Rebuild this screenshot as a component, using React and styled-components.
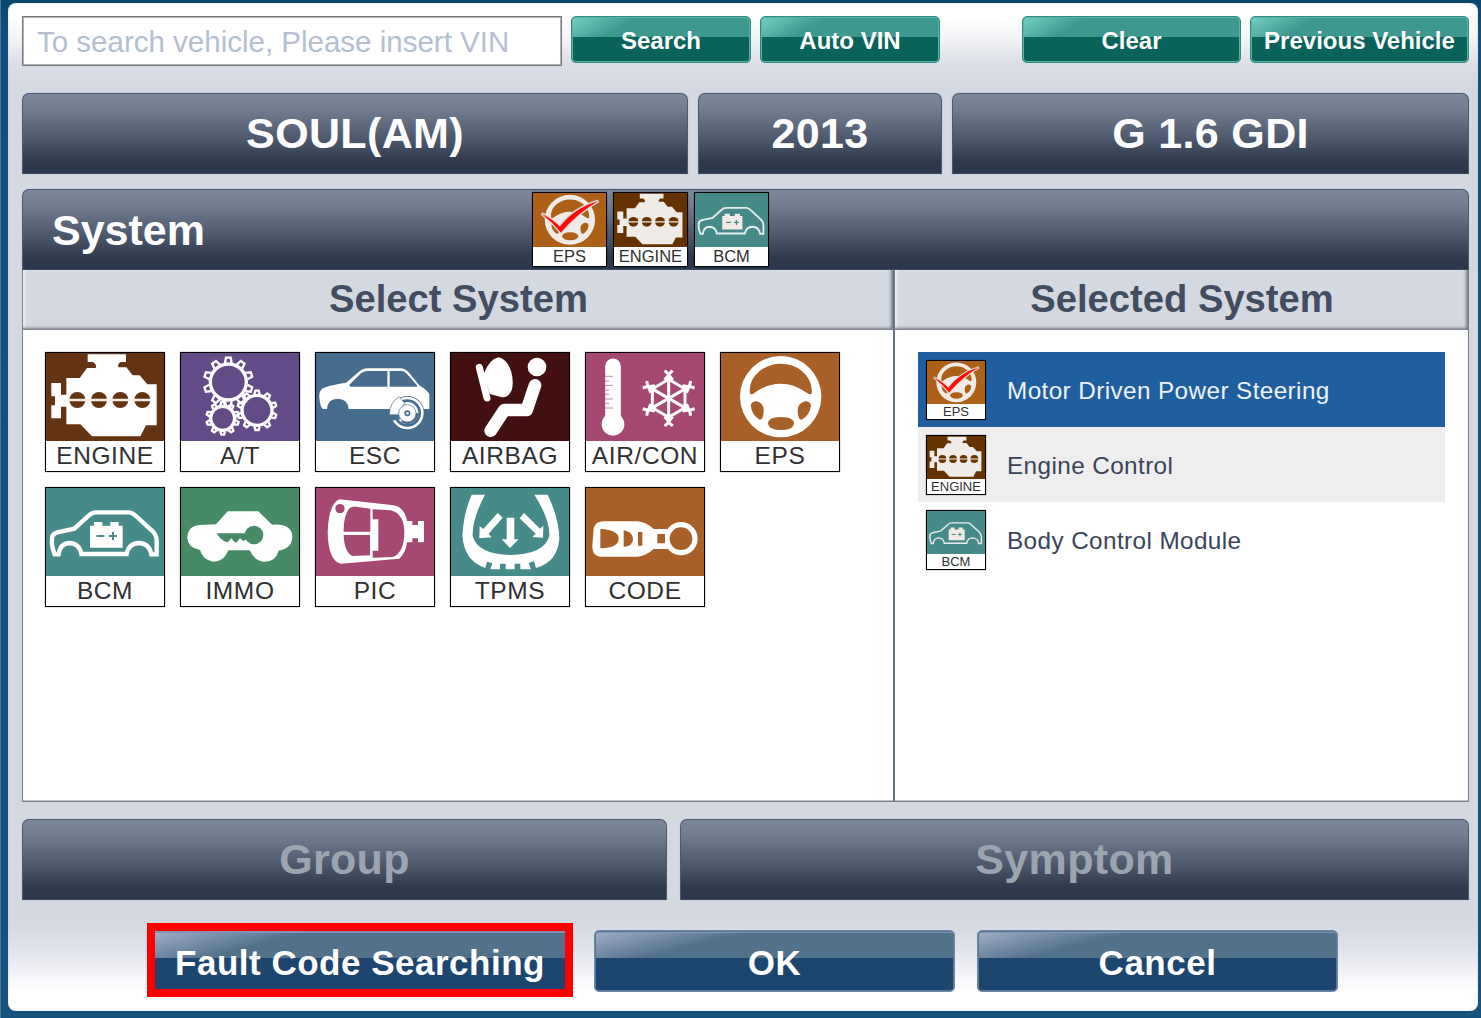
import React from 'react';
import styled, { createGlobalStyle, css } from 'styled-components';

const GlobalStyle = createGlobalStyle`
  * { box-sizing: border-box; }
  html, body { margin: 0; padding: 0; }
  body {
    font-family: "Liberation Sans", Arial, sans-serif;
    background: #124f7d;
    overflow: hidden;
  }
`;

const Frame = styled.div`
  width: 1481px;
  height: 1018px;
  padding: 3px 3px 7px 7px;
  border-left: 1px solid #3f7aa3;
  background: linear-gradient(#0a456c 0, #124f7d 30px, #17527c 100%);
`;

const Panel = styled.main`
  display: flex;
  flex-direction: column;
  height: 1008px;
  padding: 13px 9px 0 14px;
  border-radius: 8px;
  box-shadow: inset 0 0 2px #b9cbd8;
  background: linear-gradient(
    #ffffff 0, #ffffff 12px, #f0f2f5 38px, #dcdfe7 60px, #d4d8e1 82px,
    #d4d8e1 920px, #dfe2e9 945px, #f6f7fa 975px, #ffffff 990px
  );
`;

const SearchRow = styled.div`
  display: flex;
  align-items: flex-start;
  height: 77px;
`;

const VinInput = styled.input`
  width: 540px;
  height: 50px;
  margin-right: 9px;
  padding: 2px 14px 0;
  border: 1px solid #777;
  box-shadow: inset 0 0 0 1px #b4b4b4;
  outline: none;
  background: #fff;
  font: 29.5px "Liberation Sans", Arial, sans-serif;
  color: #2e394e;
  &::placeholder { color: #b6bfd2; opacity: 1; }
`;

const glossy = css`
  display: flex;
  align-items: center;
  justify-content: center;
  margin: 0;
  padding: 0;
  color: #fff;
  font-family: "Liberation Sans", Arial, sans-serif;
  font-weight: bold;
  white-space: nowrap;
`;

const GreenButton = styled.button`
  ${glossy}
  width: ${p => p.$width}px;
  height: 47px;
  margin-left: ${p => p.$before || 0}px;
  padding-top: 2px;
  border: 1px solid #2f8a80;
  border-radius: 5px;
  font-size: 24px;
  box-shadow: inset 0 0 0 1px #5fb0a6;
  background:
    linear-gradient(150deg, #74d0c4 0, rgba(61, 153, 143, 0) 34px) 0 0 / 100% 20px no-repeat,
    linear-gradient(#3d998f 0, #3d998f 20px, #0a635a 20px, #0a635a 100%);
`;

const BarRow = styled.div`
  display: flex;
  gap: ${p => p.$gap}px;
  height: 81px;
`;

const bar = css`
  height: 81px;
  border: 1px solid #4d5a72;
  border-bottom-color: #3e4a61;
  border-radius: 7px 7px 0 0;
  box-shadow: 0 0 1px #8f9aae;
  background: linear-gradient(#7d879b 0, #747e92 14px, #4c576b 46px, #2f394e 68px, #2d374c 100%);
  font-size: 43px;
  font-weight: bold;
`;

const Bar = styled.div`
  ${bar}
  display: flex;
  align-items: center;
  justify-content: center;
  width: ${p => p.$width}px;
  padding-bottom: 1px;
  letter-spacing: 0.35px;
  color: ${p => (p.$disabled ? '#9da4b1' : '#ffffff')};
`;

const SystemSection = styled.section`
  display: flex;
  flex-direction: column;
  width: 1447px;
  height: 613px;
  margin: 15px 0 17px;
`;

const SystemBar = styled.header`
  ${bar}
  flex: none;
  display: flex;
  align-items: center;
  padding-left: 29px;
  color: #fff;
`;

const SystemTitle = styled.span`
  width: 480px;
  padding-top: 2px;
`;

const HeaderIcons = styled.div`
  display: flex;
  gap: 6px;
`;

const Columns = styled.div`
  display: flex;
  flex: 1;
  border: 1px solid #7c7f84;
  border-top: 0;
  box-shadow: inset 0 -1px 0 #c2c5c6;
  background: #fff;
`;

const Column = styled.div`
  width: ${p => p.$width}px;
  border-right: ${p => (p.$divided ? '2px solid #69768a' : '0')};
`;

const ColumnTitle = styled.h2`
  display: flex;
  align-items: center;
  justify-content: center;
  height: 60px;
  margin: 0;
  padding: 0 0 3px 1px;
  color: #424d62;
  background: #d4d8e1;
  box-shadow: inset -3px -3px 3px -1px #777c84, inset 3px 0 3px -1px #f1f3f6;
  font-size: 38.2px;
`;

const SystemGrid = styled.div`
  display: grid;
  grid-template-columns: repeat(6, 120px);
  gap: 15px;
  padding: 22px 0 0 22px;
`;

const TileBox = styled.div`
  flex: none;
  width: ${p => p.$size}px;
  height: ${p => p.$size}px;
  border: 1px solid #000;
  background: #fff;
  box-shadow: 0 0 1px rgba(0, 0, 0, 0.6);
`;

const TileArt = styled.svg`
  display: block;
  width: 100%;
  height: ${p => p.$height}px;
  background: ${p => p.$color};
`;

const TileLabel = styled.div`
  height: ${p => p.$height}px;
  line-height: ${p => p.$height}px;
  color: #303030;
  font-size: ${p => p.$font}px;
  font-weight: normal;
  letter-spacing: ${p => p.$spacing}px;
  text-align: center;
  white-space: nowrap;
`;

const SelectedList = styled.ul`
  margin: 22px 0 0 23px;
  padding: 0;
  width: 527px;
  list-style: none;
`;

const SelectedRow = styled.li`
  display: flex;
  align-items: center;
  height: 75px;
  padding: 1px 0 0 8px;
  background: ${p => p.$fill};
`;

const SelectedName = styled.span`
  padding: 2px 0 0 21px;
  color: ${p => (p.$active ? '#eef2f8' : '#3a4459')};
  font-size: 24.3px;
  letter-spacing: 0.4px;
`;

const Footer = styled.footer`
  display: flex;
  align-items: flex-start;
  height: 74px;
  margin-top: 23px;
  padding-left: 125px;
`;

const BlueButton = styled.button`
  ${glossy}
  width: ${p => p.$width}px;
  height: ${p => p.$height || 62}px;
  margin: ${p => p.$margin || 0};
  padding-top: ${p => (p.$flat ? 6 : 4)}px;
  border: ${p => (p.$flat ? '0' : '1px solid #6f87a6')};
  border-radius: ${p => (p.$flat ? 0 : 5)}px;
  box-shadow: ${p => (p.$flat ? 'inset 0 2px 0 #7f96b0' : 'inset 0 0 0 1px #5b7899, inset 0 2px 0 #8097b0')};
  font-size: 35px;
  letter-spacing: 0.5px;
  background:
    linear-gradient(165deg, #a3afcb 0, rgba(82, 113, 139, 0) 40px) 0 0 / 100% 27px no-repeat,
    linear-gradient(#52718b 0, #52718b 27px, #1c4670 27px, #1c4670 100%);
`;

const Highlight = styled.div`
  width: 426px;
  height: 74px;
  border: 8px solid #ff0000;
`;

function Engine({ bg }) {
  return (
    <>
      <path d="M175 45H290V68H274Q262 76 268 84H291L310 108H331L354 135H382V258H350L333 291H188L153 255H111V202H95V237H66V198H77V171H66V131H95V166H111V116H151L173 86H199Q204 76 190 68H175Z" />
      {[144, 209, 273, 339].map(x => <circle key={x} cx={x} cy="182" r="24" fill={bg} />)}
      <path d="M116 182H364" stroke="#f5ede2" strokeWidth="7" />
    </>
  );
}

function Gear({ x, y, r, tip, w }) {
  const teeth = Array.from({ length: 10 }, (_, i) => i * 36);
  return (
    <g transform={`translate(${x} ${y})`} fill="none" stroke="#fff" strokeWidth="7">
      <circle r={r} strokeWidth="10" />
      {teeth.map(a => (
        <path key={a} transform={`rotate(${a})`} d={`M${-w} ${-r - 3}L${-w + 3} ${-tip}H${w - 3}L${w} ${-r - 3}`} />
      ))}
    </g>
  );
}

function Gearbox() {
  return (
    <>
      <Gear x={597} y={128} r={54} tip={73} w={10} />
      <Gear x={683} y={213} r={45} tip={59} w={8} />
      <Gear x={580} y={237} r={36} tip={49} w={7} />
    </>
  );
}

function Brake({ bg }) {
  return (
    <>
      <path d="M55 209H68Q70 178 100 178Q130 178 133 209H375V165Q372 155 345 138L312 98Q300 87 290 87H185Q170 90 155 105L125 130Q60 140 52 150Q43 160 45 175Q47 200 55 209Z" />
      <path fill={bg} d="M138 142L135 136L170 102Q180 95 190 95H249V142ZM256 95H290Q300 95 306 102L338 138V142H256Z" />
      <circle cx="309" cy="221" r="51" fill={bg} />
      <circle cx="309" cy="221" r="45" fill="none" stroke="#fff" strokeWidth="8" />
      <circle cx="309" cy="221" r="33" fill="#fff" />
      <path d="M342 221A33 33 0 0 1 290 248L297 238A21 21 0 0 0 332 221Z" fill={bg} />
      <path fill={bg} d="M250 227H284L288 240L262 244Z" />
      <path stroke={bg} strokeWidth="2" d="M255 226Q256 188 285 172L301 192L280 226Z" />
      <circle cx="309" cy="222" r="26" stroke={bg} strokeWidth="2" />
      <circle cx="309" cy="222" r="9" fill={bg} />
      <circle cx="309" cy="222" r="4" />
    </>
  );
}

function Airbag() {
  return (
    <>
      <circle cx="698" cy="83" r="28" />
      <path d="M525 84L548 176" stroke="#fff" strokeWidth="21" strokeLinecap="round" />
      <path d="M538 104Q556 58 583 54Q609 60 621 98Q629 130 622 153Q610 178 590 173L556 164Z" />
      <path d="M692 138L667 212H600L559 274" fill="none" stroke="#fff" strokeWidth="38" strokeLinecap="round" strokeLinejoin="round" />
    </>
  );
}

function AirCon({ bg }) {
  const spokes = [0, 60, 120, 180, 240, 300];
  return (
    <>
      <path d="M116 81V250" stroke="#fff" strokeWidth="47" strokeLinecap="round" />
      <circle cx="116" cy="255" r="34" />
      <path d="M91 111H116M91 125H105M91 138H116M91 152H105M91 165H105M91 179H116M91 192H105M91 206H116" stroke={bg} strokeWidth="2.5" opacity=".75" />
      <g transform="translate(283 177)" fill="none" stroke="#fff" strokeWidth="9">
        <path d="M0-57L49-28V28L0 57L-49 28V-28Z" />
        {spokes.map(a => (
          <path key={a} transform={`rotate(${a})`} d="M0 0V-78M-12-83L0-72L12-83M-12-55L0-70L12-55" />
        ))}
      </g>
    </>
  );
}

function Wheel({ bg, checked }) {
  return (
    <>
      <circle cx="619" cy="172" r="122" />
      <g fill={bg}>
        <path d="M527 163Q522 122 557 94Q585 73 619 73Q655 73 682 94Q716 122 712 163Q706 167 698 161Q660 133 619 133Q577 133 540 161Q532 167 527 163Z" />
        <path d="M529 198Q533 185 547 186Q570 192 568 217Q567 240 556 241Q532 228 529 198Z" />
        <path d="M710 198Q706 185 692 186Q669 192 670 217Q671 240 682 241Q707 228 710 198Z" />
        <path d="M581 253Q581 234 620 233Q659 234 659 253Q655 272 620 272Q585 272 581 253Z" />
      </g>
      {checked && (
        <path d="M482 142Q535 168 570 205Q640 114 757 80Q660 136 575 234Q535 184 482 142Z" fill="#ff0a0a" stroke="#ddd8d2" strokeWidth="14" paintOrder="stroke" />
      )}
    </>
  );
}

function BodyCar({ bg, small }) {
  return (
    <>
      <path
        fill="none"
        stroke={small ? '#e6eeed' : '#fff'}
        strokeWidth={small ? 9 : 13}
        d="M88 645H76Q66 620 68 600Q66 585 84 579L135 568L178 529Q188 519 200 519H300Q310 520 320 530L370 576Q382 588 382 605V645H366Q360 612 328 611Q298 612 292 644H156Q150 612 121 611Q92 612 88 645Z"
      />
      <path d="M182 559H194V548H219V559H243V548H268V559H280V625H182Z" />
      <path d="M201 590H225M239 590H263M251 578V602" stroke={bg} strokeWidth="6" />
    </>
  );
}

function KeyCar({ bg }) {
  return (
    <>
      <path d="M595 516H687L728 556Q790 552 789 595Q787 627 748 634Q738 668 705 667Q675 665 661 633H597Q585 667 552 667Q520 662 512 632Q475 625 474 597Q475 560 510 557L560 555Z" />
      <circle cx="674" cy="587" r="28" fill={bg} />
      <path fill={bg} d="M562 582H652V599L642 605L632 597L622 609H616L606 597L595 609L585 606L572 596Z" />
    </>
  );
}

function KeyFob({ bg }) {
  return (
    <>
      <path d="M105 480L262 497Q300 500 308 545H324V557H341V545H359V609H341V597H324V609H308Q305 640 285 658L110 673Q72 665 70 580Q72 495 105 480Z" />
      <path fill={bg} d="M135 507Q145 500 155 502L198 508V577H118Q117 530 135 507ZM118 587H197V648L145 650Q120 640 118 587ZM205 510L260 513Q300 525 300 578Q300 640 265 653L205 655V634H222V540H205Z" />
      <circle cx="107" cy="508" r="14" fill={bg} />
    </>
  );
}

function Tyre() {
  return (
    <>
      <path d="M502 466H542Q503 540 505 590Q520 645 618 647Q720 645 735 590Q737 540 690 466H730Q765 540 765 600Q758 670 695 686L689 666L673 671L680 690H648V673H631V690H604V673H587V690H558L564 672L548 667L543 686Q480 665 474 590Q478 520 502 466Z" />
      <path d="M607 535H630V600H643L617 626L592 600H607Z" />
      <path d="M580 521L595 535L553 583L562 594L525 597L526 560L537 569Z" />
      <path d="M659 521L646 537L694 583L684 593L716 595L717 559L707 568Z" />
    </>
  );
}

function CodeKey({ bg }) {
  return (
    <>
      <path d="M85 546H190Q215 548 238 569H280V629H238Q215 650 190 652H75Q53 648 54 620L57 580Q55 548 85 546Z" />
      <circle cx="320" cy="598" r="50" />
      <g fill={bg}>
        <path d="M78 569Q133 572 133 598Q133 625 78 627ZM148 573Q176 578 176 600Q176 620 148 623ZM191 578H204V619H191ZM249 584H272V612H249Z" />
        <circle cx="320" cy="598" r="34" />
      </g>
    </>
  );
}

const systems = {
  engine: { label: 'ENGINE', color: '#633312', Art: Engine, x: 50, y: 41 },
  at: { label: 'A/T', color: '#634b88', Art: Gearbox, x: 455, y: 41 },
  esc: { label: 'ESC', color: '#466d8d', Art: Brake, x: 35, y: 41 },
  airbag: { label: 'AIRBAG', color: '#421010', Art: Airbag, x: 440, y: 41 },
  aircon: { label: 'AIR/CON', color: '#a54973', Art: AirCon, x: 35, y: 41 },
  eps: { label: 'EPS', color: '#a85f28', Art: Wheel, x: 440, y: 41 },
  bcm: { label: 'BCM', color: '#468a89', Art: BodyCar, x: 50, y: 446 },
  immo: { label: 'IMMO', color: '#468a66', Art: KeyCar, x: 455, y: 446 },
  pic: { label: 'PIC', color: '#a54973', Art: KeyFob, x: 35, y: 446 },
  tpms: { label: 'TPMS', color: '#468a89', Art: Tyre, x: 440, y: 446 },
  code: { label: 'CODE', color: '#a85f28', Art: CodeKey, x: 35, y: 446 },
};

const sizes = {
  large: { box: 120, art: 88, label: 30, font: 24.5, spacing: 0.6 },
  medium: { box: 75, art: 54, label: 19, font: 16.5, spacing: 0 },
  small: { box: 60, art: 43, label: 15, font: 13, spacing: 0 },
};

const compactColors = { engine: '#663300', eps: '#ad6118', bcm: '#468a89' };

function Tile({ id, size = 'large', checked }) {
  const { label, color, Art, x, y } = systems[id];
  const s = sizes[size];
  const compact = size !== 'large';
  const bg = compact ? compactColors[id] : color;
  return (
    <TileBox $size={s.box}>
      <TileArt $height={s.art} $color={bg} viewBox={`${x} ${y} 354 264`} preserveAspectRatio="none" fill={compact ? '#f0ebe6' : '#ffffff'}>
        <Art bg={bg} small={compact} checked={checked} />
      </TileArt>
      <TileLabel $height={s.label} $font={s.font} $spacing={s.spacing}>{label}</TileLabel>
    </TileBox>
  );
}

const selected = [
  { id: 'eps', name: 'Motor Driven Power Steering', fill: '#205f9f', active: true },
  { id: 'engine', name: 'Engine Control', fill: '#eeeeee' },
  { id: 'bcm', name: 'Body Control Module', fill: '#ffffff' },
];

export default function App() {
  return (
    <>
      <GlobalStyle />
      <Frame>
        <Panel>
          <SearchRow>
            <VinInput placeholder="To search vehicle, Please insert VIN" />
            <GreenButton $width={180}>Search</GreenButton>
            <GreenButton $width={180} $before={9}>Auto VIN</GreenButton>
            <GreenButton $width={219} $before={82}>Clear</GreenButton>
            <GreenButton $width={219} $before={9}>Previous Vehicle</GreenButton>
          </SearchRow>

          <BarRow $gap={10}>
            <Bar $width={666}>SOUL(AM)</Bar>
            <Bar $width={244}>2013</Bar>
            <Bar $width={517}>G 1.6 GDI</Bar>
          </BarRow>

          <SystemSection>
            <SystemBar>
              <SystemTitle>System</SystemTitle>
              <HeaderIcons>
                <Tile id="eps" size="medium" checked />
                <Tile id="engine" size="medium" />
                <Tile id="bcm" size="medium" />
              </HeaderIcons>
            </SystemBar>
            <Columns>
              <Column $width={872} $divided>
                <ColumnTitle>Select System</ColumnTitle>
                <SystemGrid>
                  {Object.keys(systems).map(id => <Tile key={id} id={id} />)}
                </SystemGrid>
              </Column>
              <Column $width={573}>
                <ColumnTitle>Selected System</ColumnTitle>
                <SelectedList>
                  {selected.map(({ id, name, fill, active }) => (
                    <SelectedRow key={id} $fill={fill}>
                      <Tile id={id} size="small" checked={active} />
                      <SelectedName $active={active}>{name}</SelectedName>
                    </SelectedRow>
                  ))}
                </SelectedList>
              </Column>
            </Columns>
          </SystemSection>

          <BarRow $gap={13}>
            <Bar $width={645} $disabled>Group</Bar>
            <Bar $width={789} $disabled>Symptom</Bar>
          </BarRow>

          <Footer>
            <Highlight>
              <BlueButton $width={410} $height={58} $flat>Fault Code Searching</BlueButton>
            </Highlight>
            <BlueButton $width={361} $margin="7px 0 0 21px">OK</BlueButton>
            <BlueButton $width={361} $margin="7px 0 0 22px">Cancel</BlueButton>
          </Footer>
        </Panel>
      </Frame>
    </>
  );
}
